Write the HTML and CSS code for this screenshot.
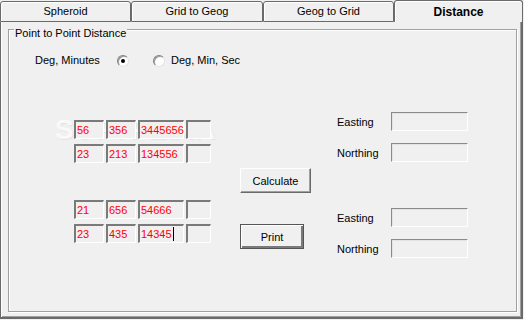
FILE: index.html
```html
<!DOCTYPE html>
<html>
<head>
    <title>Distance</title>
    <link rel="stylesheet" href="styles.css">
</head>
<body>
    <div class="window">
        <div class="tabs">
            <div class="tab tab-spheroid">Spheroid</div>
            <div class="tab tab-grid">Grid to Geog</div>
            <div class="tab tab-geog">Geog to Grid</div>
            <div class="tab active">Distance</div>
        </div>

        <div class="panel">
            <div class="group">
                <span class="group-title">Point to Point Distance</span>

                <div class="watermark">SOFTPEDIA</div>

                <div class="units">
                    <span class="unit-label">Deg, Minutes</span>
                    <span class="radio checked"></span>
                    <span class="radio second"></span>
                    <span class="unit-label-2">Deg, Min, Sec</span>
                </div>

                <div class="calc">
                    <div class="points">
                        <div class="pair">
                            <div class="point-row">
                                <span class="field deg">56</span>
                                <span class="field min">356</span>
                                <span class="field sec">3445656</span>
                                <span class="field hem"></span>
                            </div>
                            <div class="point-row">
                                <span class="field deg">23</span>
                                <span class="field min">213</span>
                                <span class="field sec">134556</span>
                                <span class="field hem"></span>
                            </div>
                        </div>
                        <div class="pair second-pair">
                            <div class="point-row">
                                <span class="field deg">21</span>
                                <span class="field min">656</span>
                                <span class="field sec">54666</span>
                                <span class="field hem"></span>
                            </div>
                            <div class="point-row">
                                <span class="field deg">23</span>
                                <span class="field min">435</span>
                                <span class="field sec">14345<span class="caret"></span></span>
                                <span class="field hem"></span>
                            </div>
                        </div>
                    </div>

                    <div class="actions">
                        <button class="btn btn-calc">Calculate</button>
                        <button class="btn btn-print">Print</button>
                    </div>

                    <div class="results">
                        <div class="result-row">
                            <span class="result-label">Easting</span>
                            <span class="result-box"></span>
                        </div>
                        <div class="result-row">
                            <span class="result-label">Northing</span>
                            <span class="result-box"></span>
                        </div>
                        <div class="result-row gap-row">
                            <span class="result-label">Easting</span>
                            <span class="result-box"></span>
                        </div>
                        <div class="result-row">
                            <span class="result-label">Northing</span>
                            <span class="result-box"></span>
                        </div>
                    </div>
                </div>
            </div>
        </div>
    </div>
</body>
</html>
```

FILE: styles.css
```css
* {
    box-sizing: border-box;
}
body {
    margin: 0;
    background-color: #f0f0f0;
    font-family: "Liberation Sans", Arial, sans-serif;
    font-size: 11px;
    color: #000;
}
.window {
    width: 524px;
    height: 320px;
    background-color: #f0f0f0;
}

/* tab strip */
.tabs {
    display: flex;
    height: 22px;
}
.tab {
    margin-top: 1px;
    height: 21px;
    border: 1px solid #6a6a6a;
    border-radius: 3px 3px 0 0;
    box-shadow: inset 1px 1px 0 #fff;
    text-align: center;
    line-height: 19px;
    font-size: 11px;
}
.tab-spheroid {
    width: 131px;
}
.tab-grid {
    width: 132px;
}
.tab-geog {
    width: 131px;
}
.tab.active {
    width: 129px;
    height: 22px;
    margin-top: 0;
    border-bottom: none;
    font-weight: bold;
    font-size: 12px;
    line-height: 23px;
}

/* panel */
.panel {
    width: 523px;
    height: 297px;
    padding: 7px 0 0 7px;
    border-left: 1px solid #6a6a6a;
    border-right: 2px solid #6a6a6a;
    border-bottom: 2px solid #6a6a6a;
    box-shadow: inset 1px 0 0 #fff, inset -1px -1px 0 #a0a0a0;
}
.group {
    position: relative;
    width: 509px;
    height: 283px;
    border: 1px solid #a0a0a0;
    box-shadow: inset 1px 1px 0 #fff, 1px 1px 0 #fff;
}
.group-title {
    position: absolute;
    top: -3px;
    left: 5px;
    padding: 0 1px;
    line-height: 13px;
    background-color: #f0f0f0;
}

/* units */
.units {
    display: flex;
    align-items: center;
    height: 13px;
    margin-top: 24px;
    padding-left: 26px;
    line-height: 13px;
}
.unit-label {
    width: 82px;
}
.unit-label-2 {
    margin-left: 6px;
}
.radio {
    position: relative;
    width: 12px;
    height: 12px;
    border-radius: 50%;
    border: 1px solid;
    border-color: #808080 #e3e3e3 #e3e3e3 #808080;
    background-color: #fff;
    box-shadow: inset 1px 1px 0 #9a9a9a;
}
.radio.second {
    margin-left: 24px;
}
.radio.checked::after {
    content: "";
    position: absolute;
    left: 3px;
    top: 3px;
    width: 4px;
    height: 4px;
    border-radius: 50%;
    background-color: #000;
}

/* coordinates, buttons and results */
.calc {
    display: flex;
    align-items: flex-start;
    margin-top: 33px;
    padding-left: 65px;
}
.points {
    position: relative;
    z-index: 1;
    margin-top: 20px;
}
.pair {
    display: flex;
    flex-direction: column;
    gap: 5px;
}
.second-pair {
    margin-top: 37px;
}
.point-row {
    display: flex;
    gap: 2px;
}
.field {
    display: block;
    height: 19px;
    padding-left: 1px;
    border-style: solid;
    border-width: 2px 1px 1px 2px;
    border-color: #7a7a7a #fff #fff #7a7a7a;
    line-height: 16px;
    color: #ff0000;
    background-color: #f0f0f0;
    white-space: nowrap;
}
.field.deg,
.field.min {
    width: 30px;
}
.field.sec {
    width: 46px;
}
.field.hem {
    width: 25px;
}
.caret {
    display: inline-block;
    width: 1px;
    height: 14px;
    margin-left: 1px;
    background-color: #000;
    vertical-align: -3px;
}

.actions {
    display: flex;
    flex-direction: column;
    align-items: flex-start;
    margin-left: 29px;
    margin-top: 68px;
}
.btn {
    height: 25px;
    padding: 0;
    font-family: "Liberation Sans", Arial, sans-serif;
    font-size: 11px;
    color: #000;
    background-color: #f0f0f0;
    border: 1px solid;
}
.btn-calc {
    width: 71px;
    border-color: #fff #6a6a6a #6a6a6a #fff;
    box-shadow: inset -1px -1px 0 #a0a0a0;
}
.btn-print {
    width: 64px;
    margin-top: 31px;
    border-color: #555;
    box-shadow: inset 1px 1px 0 #fff, inset -2px -2px 0 #7a7a7a;
}

.results {
    margin-left: 26px;
    margin-top: 12px;
}
.result-row {
    display: flex;
    align-items: center;
    height: 19px;
    margin-bottom: 12px;
}
.gap-row {
    margin-top: 46px;
}
.result-label {
    width: 54px;
}
.result-box {
    width: 77px;
    height: 19px;
    border: 1px solid;
    border-color: #8a8a8a #fff #fff #8a8a8a;
    box-shadow: inset 1px 1px 0 #e3e3e3;
}

.watermark {
    position: absolute;
    z-index: 0;
    left: 46px;
    top: 86px;
    font-size: 28px;
    font-weight: bold;
    line-height: 28px;
    color: rgba(255, 255, 255, 0.8);
    text-shadow: 1px 1px 1px rgba(0, 0, 0, 0.06);
    pointer-events: none;
}
```
